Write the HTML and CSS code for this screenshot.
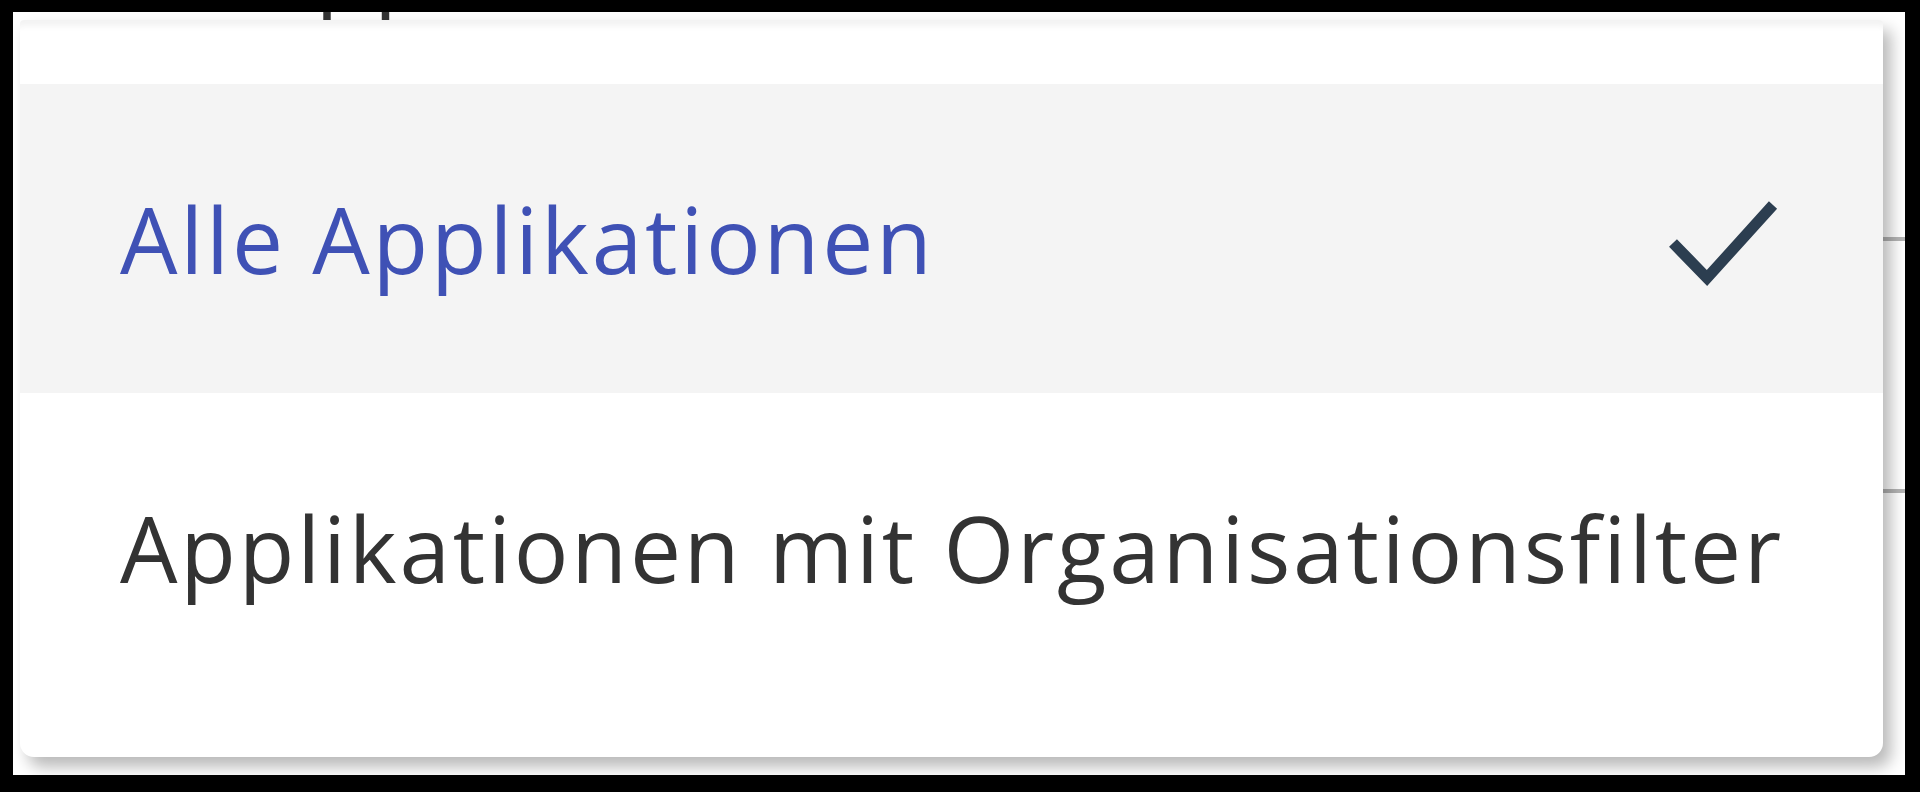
FILE: index.html
```html
<!DOCTYPE html>
<html lang="de">
<head>
  <meta charset="UTF-8">
  <title>Applikationen Auswahl</title>
  <link rel="stylesheet" href="styles.css">
</head>
<body>

  <div class="page">
    <div class="backdrop">
      <div class="field">
        <span class="field-value">Alle Applikationen</span>
      </div>
      <div class="table-row first"></div>
      <div class="table-row"></div>
    </div>

    <div class="menu" role="listbox">
      <div class="option selected" role="option" aria-selected="true">
        <span class="option-label">Alle Applikationen</span>
        <svg class="check" width="112" height="88" viewBox="0 0 112 88">
          <path d="M6 44 L40 79 L106 6" fill="none" stroke="#2c3e50" stroke-width="11"/>
        </svg>
      </div>
      <div class="option" role="option">
        <span class="option-label">Applikationen mit Organisationsfilter</span>
      </div>
    </div>
  </div>

</body>
</html>
```

FILE: styles.css
```css
* {
  box-sizing: border-box;
}

body {
  margin: 0;
  background-color: #000;
  padding: 12px 15px 17px 13px;
  height: 100vh;
  font-family: "Open Sans", "Noto Sans", Arial, sans-serif;
}

.page {
  position: relative;
  height: 100%;
  background-color: #fff;
  overflow: hidden;
}

/* content behind the dropdown */
.field {
  height: 10px;
  overflow: hidden;
  padding-left: 50px;
}

.field-value {
  display: block;
  margin-top: -109px;
  font-size: 91px;
  line-height: 124px;
  letter-spacing: 2.8px;
  color: #333;
  white-space: nowrap;
}

.table-row {
  height: 252px;
  margin-left: 1820px;
  border-bottom: 4px solid #b4b4b4;
}

.table-row.first {
  height: 219px;
}

/* dropdown panel */
.menu {
  position: absolute;
  top: 8px;
  left: 7px;
  width: 1863px;
  padding: 64px 0 55px;
  background-color: #fff;
  border-radius: 4px 4px 14px 14px;
  box-shadow: 8px 10px 16px rgba(0, 0, 0, 0.28), inset 0 14px 6px -8px rgba(0, 0, 0, 0.05);
}

.option {
  display: flex;
  align-items: center;
  justify-content: space-between;
  height: 309px;
  padding: 0 104px 0 100px;
  font-size: 91px;
  letter-spacing: 2.8px;
  color: #333;
  white-space: nowrap;
}

.option.selected {
  background-color: #f4f4f4;
  color: #3f51b5;
}

.check {
  margin-top: 9px;
  flex-shrink: 0;
}
```
